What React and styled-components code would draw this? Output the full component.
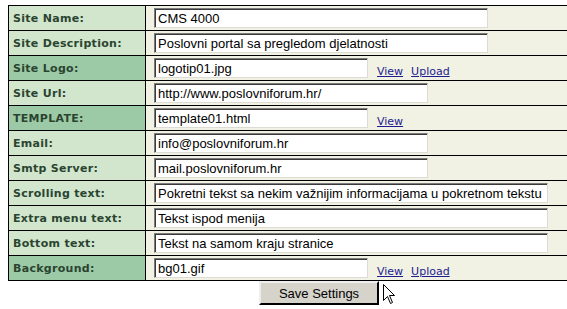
import React from "react";
import styled, { createGlobalStyle } from "styled-components";

const GlobalStyle = createGlobalStyle`
  html, body {
    margin: 0;
    padding: 0;
    background: #fff;
    overflow: hidden;
  }
  body {
    padding: 5px 0 0 8px;
  }
`;

const SettingsTable = styled.table`
  border-collapse: collapse;
  width: 580px;
  table-layout: fixed;
`;

const LabelCell = styled.td`
  width: 132px;
  height: 24px;
  padding: 0 0 0 4px;
  border: 1px solid #000;
  background: ${(p) => (p.$dark ? "#9ccaa6" : "#d1e6cd")};
  color: #2b4430;
  font-family: Verdana, "DejaVu Sans", sans-serif;
  font-weight: bold;
  font-size: 11px;
  letter-spacing: 0.3px;
  white-space: nowrap;
`;

const ValueCell = styled.td`
  height: 24px;
  padding: 0 0 0 8px;
  border: 1px solid #000;
  border-right: none;
  background: #f1f1e4;
  white-space: nowrap;
`;

const Field = styled.input`
  box-sizing: border-box;
  width: ${(p) => p.$w}px;
  height: 20px;
  margin: 0;
  padding: 0 2px 0 3px;
  border: 1px solid;
  border-color: #7b7b7b #dcdcd4 #dcdcd4 #7b7b7b;
  box-shadow: inset 1px 1px 0 #3a3a3a;
  background: #fff;
  color: #000;
  font-family: Arial, "Liberation Sans", sans-serif;
  font-size: 13px;
  vertical-align: middle;
  outline: none;
`;

const Links = styled.span`
  display: inline-flex;
  gap: 8px;
  margin-left: 9px;
  vertical-align: middle;
  position: relative;
  top: 3px;
`;

const FileLink = styled.a`
  color: #1c1c8e;
  text-decoration: underline;
  font-family: Verdana, "DejaVu Sans", sans-serif;
  font-size: 11px;
`;

const Footer = styled.div`
  display: flex;
  align-items: flex-start;
  padding-left: 251px;
`;

const SaveButton = styled.button`
  box-sizing: border-box;
  width: 120px;
  height: 24px;
  margin: 0;
  background: #d6d3cb;
  border: 2px outset #eee;
  border-right-color: #444;
  border-bottom-color: #444;
  font-family: Arial, "Liberation Sans", sans-serif;
  font-size: 13px;
  color: #000;
`;

const Pointer = styled.svg`
  margin: 3px 0 0 4px;
`;

const rows = [
  { label: "Site Name:", value: "CMS 4000", w: 334 },
  { label: "Site Description:", value: "Poslovni portal sa pregledom djelatnosti", w: 334 },
  { label: "Site Logo:", value: "logotip01.jpg", w: 214, dark: true, links: ["View", "Upload"] },
  { label: "Site Url:", value: "http://www.poslovniforum.hr/", w: 274 },
  { label: "TEMPLATE:", value: "template01.html", w: 214, dark: true, links: ["View"] },
  { label: "Email:", value: "info@poslovniforum.hr", w: 274 },
  { label: "Smtp Server:", value: "mail.poslovniforum.hr", w: 274 },
  { label: "Scrolling text:", value: "Pokretni tekst sa nekim važnijim informacijama u pokretnom tekstu", w: 394 },
  { label: "Extra menu text:", value: "Tekst ispod menija", w: 394 },
  { label: "Bottom text:", value: "Tekst na samom kraju stranice", w: 394 },
  { label: "Background:", value: "bg01.gif", w: 214, dark: true, links: ["View", "Upload"] },
];

const App = () => {
  return (
    <>
      <GlobalStyle />
      <SettingsTable>
        <tbody>
          {rows.map((r) => (
            <tr key={r.label}>
              <LabelCell $dark={r.dark}>{r.label}</LabelCell>
              <ValueCell>
                <Field $w={r.w} defaultValue={r.value} />
                {r.links && (
                  <Links>
                    {r.links.map((l) => (
                      <FileLink key={l} href="#">
                        {l}
                      </FileLink>
                    ))}
                  </Links>
                )}
              </ValueCell>
            </tr>
          ))}
        </tbody>
      </SettingsTable>
      <Footer>
        <SaveButton>Save Settings</SaveButton>
        <Pointer width="13" height="21" viewBox="0 0 13 21">
          <path
            d="M0.5 0.5 L0.5 16.5 L4.5 12.5 L7.5 19.5 L9.5 18.5 L6.5 11.5 L11.5 11.5 Z"
            fill="#fff"
            stroke="#000"
            strokeWidth="1"
          />
        </Pointer>
      </Footer>
    </>
  );
};

export default App;
